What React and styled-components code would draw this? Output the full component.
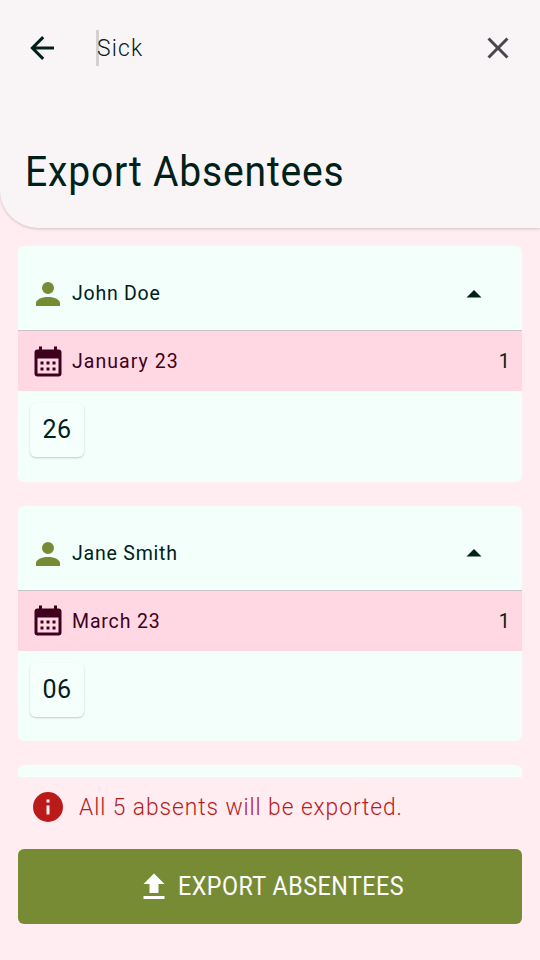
import React from "react";
import styled, { createGlobalStyle } from "styled-components";

const GlobalStyle = createGlobalStyle`
  * { box-sizing: border-box; }
  body { margin: 0; background: #ffedf2; font-family: Roboto, "Liberation Sans", sans-serif; color: #00201a; }
`;

const Screen = styled.main`
  display: flex;
  flex-direction: column;
  width: 540px;
  height: 960px;
  overflow: hidden;
  background: #ffedf2;
`;

const Header = styled.header`
  flex: none;
  height: 228px;
  background: #f9f5f6;
  border-bottom-left-radius: 38px;
  box-shadow: 0 1px 3px rgba(60, 30, 40, 0.22);
`;

const SearchBar = styled.div`
  display: flex;
  align-items: center;
  height: 96px;
  padding: 0 24px;
`;

const SearchField = styled.div`
  flex: 1;
  display: flex;
  align-items: center;
  height: 36px;
  margin-left: 36px;
`;

const Caret = styled.span`
  width: 3px;
  height: 36px;
  margin-right: -2px;
  background: #d5d0d4;
`;

const Condensed = styled.span`
  transform: scaleX(0.93);
  transform-origin: left center;
  white-space: nowrap;
`;

const Query = styled(Condensed)`
  font-size: 24.5px;
  font-weight: 300;
  line-height: 36px;
  letter-spacing: 1.3px;
`;

const Title = styled(Condensed).attrs({ as: "h1" })`
  margin: 46px 0 0 24.5px;
  font-size: 42px;
  font-weight: 400;
  line-height: 60px;
  letter-spacing: 0.86px;
`;

const List = styled.section`
  flex: none;
  display: flex;
  flex-direction: column;
  gap: 24px;
  height: 549px;
  padding: 18px 18px 0;
  overflow: hidden;
`;

const Card = styled.article`
  flex: none;
  height: 235.5px;
  border-radius: 6px;
  overflow: hidden;
  background: #f2fffb;
`;

const CardHead = styled.div`
  display: flex;
  align-items: center;
  height: 85px;
  padding: 10px 30px 0 12px;
  border-bottom: 1px solid #c9c1c9;
`;

const MonthRow = styled.div`
  display: flex;
  align-items: center;
  height: 60.25px;
  padding: 0 12px;
  background: #ffd8e3;
  color: #3e001d;
`;

const Label = styled(Condensed)`
  flex: 1;
  margin-left: 6px;
  font-size: 21px;
  line-height: 30px;
  letter-spacing: ${(p) => p.$spacing};
`;

const Count = styled(Condensed)`
  transform-origin: right center;
  font-size: 21px;
  line-height: 30px;
  color: #00201a;
`;

const Days = styled.div`
  display: flex;
  padding: 12px;
`;

const Day = styled.span`
  display: flex;
  align-items: center;
  justify-content: center;
  width: 54px;
  height: 54px;
  padding-bottom: 1px;
  border-radius: 6px;
  background: #f5fffc;
  box-shadow: 0 1px 2px rgba(0, 32, 26, 0.22);
  font-size: 25px;
  letter-spacing: 0.5px;
`;

const Footer = styled.footer`
  display: flex;
  flex-direction: column;
  padding: 0 18px;
`;

const Notice = styled.div`
  display: flex;
  align-items: center;
  height: 60px;
  margin-bottom: 12px;
  padding-left: 12px;
  color: #ba1a1a;
`;

const NoticeText = styled(Condensed)`
  margin: 0 0 2px 12.5px;
  font-size: 24.5px;
  font-weight: 300;
  letter-spacing: 1px;
`;

const ExportButton = styled.button`
  display: flex;
  align-items: center;
  height: 75px;
  padding: 0 0 0 118px;
  border: 0;
  border-radius: 6px;
  background: #778b35;
  color: #fff;
  font-family: inherit;
  font-size: 25px;
`;

const ButtonText = styled(Condensed)`
  margin-left: 6px;
  letter-spacing: 0.53px;
`;

const Svg = styled.svg`
  flex: none;
  width: 36px;
  height: 36px;
  fill: ${(p) => p.$color || "currentColor"};
  margin-top: ${(p) => p.$drop || "0"};
`;

const paths = {
  back: "M20 11V13H8L13.5 18.5L12.08 19.92L4.16 12L12.08 4.08L13.5 5.5L8 11H20Z",
  close: "M19 6.41L17.59 5L12 10.59L6.41 5L5 6.41L10.59 12L5 17.59L6.41 19L12 13.41L17.59 19L19 17.59L13.41 12Z",
  person: "M12 4A4 4 0 0 1 16 8A4 4 0 0 1 12 12A4 4 0 0 1 8 8A4 4 0 0 1 12 4M12 14C16.42 14 20 15.79 20 18V20H4V18C4 15.79 7.58 14 12 14Z",
  calendar: "M9 11H7V13H9ZM13 11H11V13H13ZM17 11H15V13H17ZM9 15H7V17H9ZM13 15H11V17H13ZM17 15H15V17H17ZM19 3H18V1H16V3H8V1H6V3H5A2 2 0 0 0 3 5V19A2 2 0 0 0 5 21H19A2 2 0 0 0 21 19V5A2 2 0 0 0 19 3ZM19 19H5V9H19Z",
  up: "M7 15L12 10L17 15Z",
  info: "M13 9H11V7H13M13 17H11V11H13M12 2A10 10 0 1 0 22 12A10 10 0 0 0 12 2Z",
  upload: "M9 16V10H5L12 3L19 10H15V16ZM5 20V18H19V20Z",
};

const Icon = ({ name, color, drop }) => (
  <Svg viewBox="0 0 24 24" $color={color} $drop={drop} aria-hidden="true">
    <path fillRule="evenodd" d={paths[name]} />
  </Svg>
);

const absentees = [
  { name: "John Doe", month: "January 23", days: ["26"], nameSpacing: "0.8px", monthSpacing: "1.1px" },
  { name: "Jane Smith", month: "March 23", days: ["06"], nameSpacing: "0.84px", monthSpacing: "0.9px" },
];

const AbsenteeCard = ({ person }) => (
  <Card>
    <CardHead>
      <Icon name="person" color="#778b35" drop="2px" />
      <Label $spacing={person.nameSpacing}>{person.name}</Label>
      <Icon name="up" drop="-1px" />
    </CardHead>
    <MonthRow>
      <Icon name="calendar" drop="3px" />
      <Label $spacing={person.monthSpacing}>{person.month}</Label>
      <Count>{person.days.length}</Count>
    </MonthRow>
    <Days>
      {person.days.map((day) => (
        <Day key={day}>{day}</Day>
      ))}
    </Days>
  </Card>
);

export default function App() {
  return (
    <>
      <GlobalStyle />
      <Screen>
        <Header>
          <SearchBar>
            <Icon name="back" />
            <SearchField>
              <Caret />
              <Query>Sick</Query>
            </SearchField>
            <Icon name="close" color="#49454e" />
          </SearchBar>
          <Title>Export Absentees</Title>
        </Header>
        <List>
          {absentees.map((person) => (
            <AbsenteeCard key={person.name} person={person} />
          ))}
          <Card />
        </List>
        <Footer>
          <Notice>
            <Icon name="info" />
            <NoticeText>All 5 absents will be exported.</NoticeText>
          </Notice>
          <ExportButton type="button">
            <Icon name="upload" />
            <ButtonText>EXPORT ABSENTEES</ButtonText>
          </ExportButton>
        </Footer>
      </Screen>
    </>
  );
}
